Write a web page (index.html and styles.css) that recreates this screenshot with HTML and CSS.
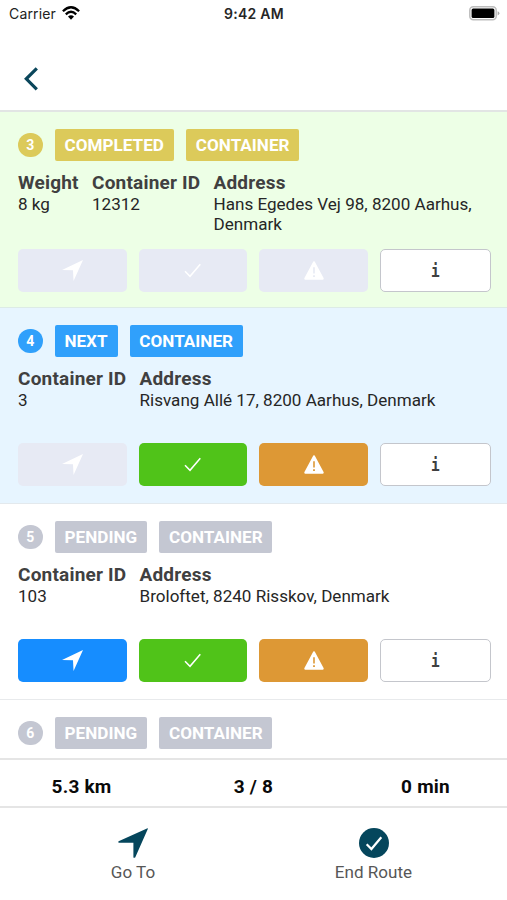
FILE: index.html
```html
<!DOCTYPE html>
<html lang="en">
<head>
<meta charset="utf-8">
<title>Route</title>
<link rel="stylesheet" href="styles.css">
</head>
<body>
<svg class="defs" aria-hidden="true">
  <symbol id="nav" viewBox="0 0 30 30"><path d="M30 0 16.5 30 15.7 14.6 0 14.2Z"/></symbol>
  <symbol id="nav-dark" viewBox="0 0 30 30"><path d="M29.5.3Q30 .2 29.8.9L17.2 29.4Q15.5 30.3 15.4 29.2V14.8H1Q-.3 14.3.6 13.2Z"/></symbol>
  <symbol id="check" viewBox="0 0 18 15"><path d="M1 8.3 6 13.3 16.3 1.2" fill="none" stroke="currentColor" stroke-width="1.5"/></symbol>
  <symbol id="warn" viewBox="0 0 20 19"><path fill-rule="evenodd" d="M9.3.6Q10 0 10.7.6L19.7 17.3Q20 18.6 18.8 18.7H1.2Q0 18.6.3 17.3ZM9.2 6.3V12.6H10.8V6.3ZM9.1 14.3V16.1H10.9V14.3Z"/></symbol>
</svg>
<div class="screen">
  <div class="status">
    <div class="carrier"><span>Carrier</span>
      <svg class="wifi" viewBox="0 0 18 14"><g fill="none" stroke="#000" stroke-width="2.3"><path d="M.9 5.2Q9-2.7 17.1 5.2"/><path d="M3.8 8.3Q9 3.3 14.2 8.3"/></g><path d="M6 10.5Q9 8 12 10.5L9 13.7Z"/></svg>
    </div>
    <div class="time">9:42 AM</div>
    <svg class="battery" viewBox="0 0 31 15"><rect x=".8" y=".8" width="26.4" height="13" rx="3.5" fill="#fff" stroke="#bdbdbd" stroke-width="1.5"/><rect x="2.6" y="2.6" width="22.8" height="9.4" rx="1.5"/><path d="M28.6 5.2Q30.4 5.8 30.4 7.3T28.6 9.5Z" fill="#aaa"/></svg>
  </div>
  <header class="header">
    <svg class="back" viewBox="0 0 14 24"><path d="M12.8 1.3 2.3 11.8 12.8 22.3" fill="none" stroke="#0a465b" stroke-width="3.2"/></svg>
  </header>
  <main class="list">
    <section class="card completed">
      <div class="tags"><span class="num">3</span><span class="tag w120">COMPLETED</span><span class="tag">CONTAINER</span></div>
      <div class="info">
        <div class="col weight"><b>Weight</b><p>8 kg</p></div>
        <div class="col cid"><b>Container ID</b><p>12312</p></div>
        <div class="col address"><b>Address</b><p>Hans Egedes Vej 98, 8200 Aarhus, Denmark</p></div>
      </div>
      <div class="actions">
        <button class="btn off"><svg class="i-nav"><use href="#nav"/></svg></button>
        <button class="btn off"><svg class="i-check"><use href="#check"/></svg></button>
        <button class="btn off"><svg class="i-warn"><use href="#warn"/></svg></button>
        <button class="btn more"><span>i</span></button>
      </div>
    </section>
    <section class="card next">
      <div class="tags"><span class="num">4</span><span class="tag w63">NEXT</span><span class="tag">CONTAINER</span></div>
      <div class="info">
        <div class="col cid"><b>Container ID</b><p>3</p></div>
        <div class="col address"><b>Address</b><p>Risvang Allé 17, 8200 Aarhus, Denmark</p></div>
      </div>
      <div class="actions">
        <button class="btn off"><svg class="i-nav"><use href="#nav"/></svg></button>
        <button class="btn green"><svg class="i-check"><use href="#check"/></svg></button>
        <button class="btn orange"><svg class="i-warn"><use href="#warn"/></svg></button>
        <button class="btn more"><span>i</span></button>
      </div>
    </section>
    <section class="card pending">
      <div class="tags"><span class="num">5</span><span class="tag w93">PENDING</span><span class="tag">CONTAINER</span></div>
      <div class="info">
        <div class="col cid"><b>Container ID</b><p>103</p></div>
        <div class="col address"><b>Address</b><p>Broloftet, 8240 Risskov, Denmark</p></div>
      </div>
      <div class="actions">
        <button class="btn blue"><svg class="i-nav"><use href="#nav"/></svg></button>
        <button class="btn green"><svg class="i-check"><use href="#check"/></svg></button>
        <button class="btn orange"><svg class="i-warn"><use href="#warn"/></svg></button>
        <button class="btn more"><span>i</span></button>
      </div>
    </section>
    <section class="card pending">
      <div class="tags"><span class="num">6</span><span class="tag w93">PENDING</span><span class="tag">CONTAINER</span></div>
    </section>
  </main>
  <div class="stats"><span>5.3 km</span><span>3 / 8</span><span>0 min</span></div>
  <nav class="tabs">
    <div class="tab goto"><svg class="tab-icon"><use href="#nav-dark"/></svg><span>Go To</span></div>
    <div class="tab end"><svg class="tab-icon" viewBox="0 0 30 30"><circle cx="15" cy="15" r="15"/><path d="M7.7 16.2 12.4 21 22.3 9.2" fill="none" stroke="#fff" stroke-width="2.2"/></svg><span>End Route</span></div>
  </nav>
</div>
</body>
</html>
```
FILE: styles.css
```css
* { box-sizing: border-box; }
body { margin: 0; background: #fff; font-family: Roboto, sans-serif; color: #262626; }
svg { display: block; flex: none; }
p { margin: 0; }
.defs { display: none; }
.screen { width: 507px; height: 900px; display: flex; flex-direction: column; overflow: hidden; }

.status { height: 27px; display: grid; grid-template-columns: 1fr 80px 1fr; align-items: center; padding: 0 7px 0 9px; font-family: Inter, sans-serif; font-size: 14px; }
.carrier { display: flex; align-items: center; gap: 6px; color: #222; letter-spacing: .15px; }
.wifi { width: 18px; height: 14px; margin-top: -1px; }
.time { text-align: center; font-weight: 600; white-space: nowrap; letter-spacing: .25px; margin-left: -1px; }
.battery { width: 31px; height: 15px; justify-self: end; }

.header { height: 85px; border-bottom: 2px solid #e2e5e4; padding: 40px 0 0 24px; }
.back { width: 14px; height: 24px; }

.list { height: 646px; overflow: hidden; }
.card { height: 196px; padding: 17px 16px 0 18px; border-bottom: 1px solid #e8eaec; }
.completed { background: #edffe6; border-color: #dcebe6; }
.next { background: #e7f5ff; border-color: #e3e9ed; }
.tags { display: flex; align-items: center; gap: 12px; height: 32px; color: #fff; font-weight: 700; }
.num { width: 24.5px; height: 24.5px; border-radius: 50%; font-size: 14px; line-height: 25px; text-align: center; }
.tag { width: 113.3px; height: 32.5px; border-radius: 2px; font-size: 17.1px; line-height: 32px; text-align: center; white-space: nowrap; }
.w120 { width: 119.5px; }
.w63 { width: 63px; }
.w93 { width: 92.7px; }
.completed .num, .completed .tag { background: #dcca5a; }
.next .num, .next .tag { background: #30a0fb; }
.pending .num, .pending .tag { background: #c4c7d2; }

.info { display: flex; height: 75.3px; margin-top: 11px; font-size: 17.07px; line-height: 20px; }
.col b { display: block; font-size: 19px; letter-spacing: .2px; line-height: 22px; color: #404040; white-space: nowrap; }
.weight { width: 74px; }
.cid { width: 121.5px; }
.address { flex: 1; }

.actions { display: grid; grid-template-columns: 108.5px 108.5px 108.5px 110.5px; gap: 12.2px; }
.completed .actions { margin-top: 2px; }
.btn { height: 43px; border: 0; border-radius: 5px; padding: 0; display: flex; align-items: center; justify-content: center; color: #fff; fill: currentColor; }
.off { background: #e7eaf4; }
.blue { background: #168dff; }
.green { background: #50c319; }
.orange { background: #dd9835; }
.more { background: #fff; border: 1.5px solid #c4c6cc; color: #404040; font: 700 18px "DejaVu Sans Mono", monospace; }
.more span { transform: scaleX(.8); }
.i-nav { width: 21px; height: 21px; }
.i-check { width: 18px; height: 15px; }
.i-warn { width: 20px; height: 19px; }

.stats { height: 50px; border-top: 2px solid #e5e5e5; border-bottom: 2px solid #e5e5e5; display: grid; grid-template-columns: 163px 181px 163px; align-items: center; text-align: center; padding-top: 6px; font-size: 19px; letter-spacing: .2px; font-weight: 700; color: #0a0a0a; }
.tabs { flex: 1; display: flex; padding-top: 20px; }
.tab { display: flex; flex-direction: column; align-items: center; font-size: 17.07px; line-height: 20px; color: #575757; gap: 4px; }
.goto { width: 266px; }
.end { width: 215px; }
.tab-icon { width: 30px; height: 30px; fill: #05465c; }
```
